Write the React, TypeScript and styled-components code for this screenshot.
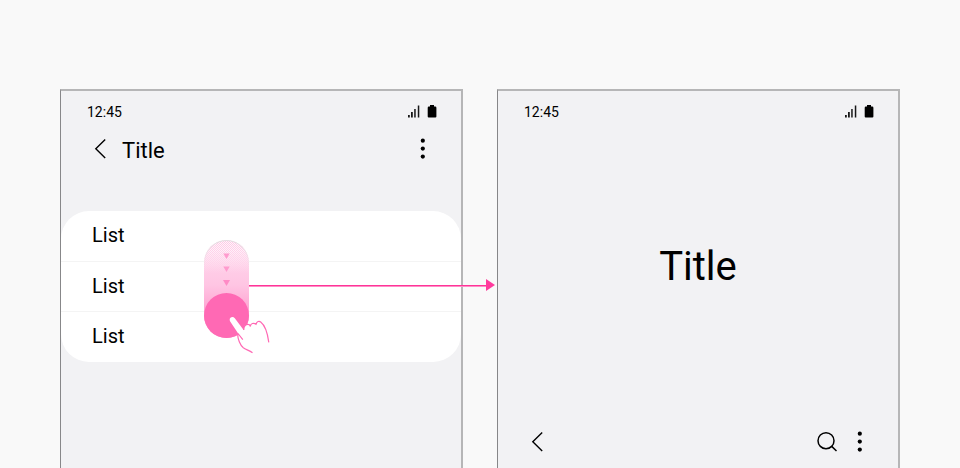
import React from "react";
import styled, { createGlobalStyle } from "styled-components";

const GlobalStyle = createGlobalStyle`
  *, *::before, *::after { box-sizing: border-box; }
  body {
    margin: 0;
    background: #f9f9f9;
    color: #000;
    font-family: Roboto, "Liberation Sans", sans-serif;
  }
`;

const Page = styled.main`
  display: grid;
  grid-template-columns: 1fr 1fr;
  gap: 34px;
  min-height: 100vh;
  padding: 89px 60px 0;
`;

const Phone = styled.section`
  display: flex;
  flex-direction: column;
  min-width: 0;
  background: #f2f2f4;
  border-style: solid;
  border-width: 2px 2px 0 1px;
  border-color: #b6b6b7 #b6b6b7 transparent #878789;
`;

const StatusBar = styled.div`
  display: flex;
  align-items: center;
  justify-content: space-between;
  height: 42px;
  padding: 0 24px 0 26px;
  font-size: 14px;
  line-height: 20px;
`;

const StatusIcons = styled.div`
  display: flex;
  gap: 7px;
  padding-bottom: 2px;
`;

const AppBar = styled.header`
  display: flex;
  align-items: center;
  height: 32px;
  padding: 0 26px 0 27px;
`;

const Toolbar = styled.footer`
  display: flex;
  align-items: center;
  height: 52px;
  padding: 0 26px 0 27px;
`;

const Spacer = styled.span`
  flex: 1;
`;

const IconButton = styled.button`
  display: flex;
  align-items: center;
  justify-content: center;
  width: 24px;
  height: 32px;
  padding: 0;
  border: 0;
  background: none;
  color: inherit;
  cursor: pointer;

  & + & { margin-left: 9px; }
`;

const BarTitle = styled.h1`
  margin: 0 0 0 10px;
  padding-top: 4px;
  font-size: 22px;
  line-height: 32px;
  font-weight: 400;
`;

const HeroTitle = styled.h1`
  flex: 1;
  display: flex;
  align-items: center;
  justify-content: center;
  margin: 0;
  padding-bottom: 16px;
  font-size: 40px;
  line-height: 48px;
  font-weight: 400;
`;

const ListArea = styled.div`
  position: relative;
  margin-top: 46px;
`;

const List = styled.ul`
  margin: 0;
  padding: 0;
  list-style: none;
  background: #fff;
  border-radius: 28px;
`;

const Row = styled.li`
  padding: 0 31px 2px;
  font-size: 20px;
  line-height: 48px;

  & + & {
    padding-bottom: 1px;
    border-top: 1px solid #f4f4f4;
  }
  &:last-child { padding-bottom: 2px; }
`;

const Gesture = styled.svg`
  position: absolute;
  top: 29px;
  left: 143px;
`;

const Connector = styled.div`
  position: absolute;
  top: 68px;
  left: 188px;
  right: -34px;
  display: flex;
  align-items: center;
  height: 12px;
  color: #ff3b9d;

  &::before {
    content: "";
    flex: 1;
    height: 2px;
    background: linear-gradient(#ff3498 50%, #ff8cc6 50%);
    transform: translateY(1px);
  }
`;

function Chevron() {
  return (
    <svg width="24" height="24" viewBox="0 0 24 24" fill="none" stroke="currentColor" strokeWidth="1.4" aria-hidden="true">
      <path d="M17.2 2.5 7.8 11.7l9.4 9.2" />
    </svg>
  );
}

function Dots() {
  return (
    <svg width="24" height="24" viewBox="0 0 24 24" fill="currentColor" aria-hidden="true">
      <circle cx="11.8" cy="3.7" r="2.1" />
      <circle cx="11.8" cy="11.6" r="2.1" />
      <circle cx="11.8" cy="19.6" r="2.1" />
    </svg>
  );
}

function SearchIcon() {
  return (
    <svg width="24" height="24" viewBox="0 0 24 24" fill="none" stroke="currentColor" strokeWidth="1.5" aria-hidden="true">
      <circle cx="11" cy="10.7" r="8" />
      <path d="m16.7 16.4 4.8 4.6" />
    </svg>
  );
}

function Status() {
  return (
    <StatusBar>
      <span>12:45</span>
      <StatusIcons>
        <svg width="13" height="13" viewBox="0 0 13 13" aria-label="Signal" role="img">
          <path d="M1 10h1.8v2.6H1zM4 7h1.8v5.6H4zM7.2 4h1.5v8.6H7.2zM10.8.5h1.5v12.1h-1.5z" fill="#181818" />
        </svg>
        <svg width="10" height="13" viewBox="0 0 10 13" aria-label="Battery" role="img">
          <path d="M3 0h4v1.5h1.2Q9.4 1.5 9.4 2.7v8.8q0 1-1 1H1.7q-1 0-1-1V2.7Q.7 1.5 1.9 1.5H3z" />
        </svg>
      </StatusIcons>
    </StatusBar>
  );
}

function SwipeDown() {
  return (
    <Gesture width="70" height="116" viewBox="0 0 70 116" aria-label="Swipe down" role="img">
      <defs>
        <linearGradient id="trail" x1="0" y1="0" x2="0" y2="1">
          <stop offset="0" stopColor="#fdfafc" />
          <stop offset=".12" stopColor="#fff0f8" />
          <stop offset=".34" stopColor="#ffcbe6" />
          <stop offset=".46" stopColor="#ffc5e3" />
          <stop offset=".7" stopColor="#ffa6d3" />
          <stop offset="1" stopColor="#ff8cc6" />
        </linearGradient>
        <pattern id="grain" width="2" height="2" patternUnits="userSpaceOnUse">
          <path d="M0 0h1v1H0zM1 1h1v1H1z" fill="#ffc2e2" />
        </pattern>
        <linearGradient id="fade" x1="0" y1="0" x2="0" y2="1">
          <stop offset="0" stopColor="#fff" />
          <stop offset="1" stopColor="#000" />
        </linearGradient>
        <linearGradient id="rim" x1="0" y1="0" x2="0" y2="1">
          <stop offset="0" stopColor="#e2dfe1" />
          <stop offset=".28" stopColor="#e2dfe1" stopOpacity="0" />
        </linearGradient>
        <mask id="upper">
          <rect width="45" height="34" fill="url(#fade)" />
        </mask>
      </defs>
      <rect width="45" height="98" rx="22.5" fill="url(#trail)" />
      <rect width="45" height="98" rx="22.5" fill="url(#grain)" mask="url(#upper)" />
      <rect x=".5" y=".5" width="44" height="97" rx="22" fill="none" stroke="url(#rim)" />
      <path d="M19.3 13.5h6.4L22.5 19zM19.3 26.5h6.4L22.5 32z" fill="#ff9bce" />
      <path d="M19 40h7l-3.5 6z" fill="#ff8bc6" />
      <circle cx="22.5" cy="75.5" r="22.5" fill="#ff69b4" />
      <path
        d="M38 99.2 26.2 81.4c-2-3.3 2.2-6 4.6-3.1l9.2 12.2v-2.8c.2-2.7 3-3.6 5.3-2.3l1.1 1.5c-.1-3 3.6-4.1 5.6-2.3 1-2.8 3-3.5 4.7-2.2 4.1 3.1 6.8 10.6 8.1 20.4L48.5 112c-3-1.7-6.6-2.3-9.2-4.2-3.2-2.5-5.6-8.8-5.7-14z"
        fill="#fff"
      />
      <path
        d="M33.6 93.8c.1 5.2 2.5 11.5 5.7 14 2.6 1.9 6.2 2.5 9.2 5M34 93.5l4.8 6.1M39.8 90v-1c0-4 3.2-5.4 5.6-4.2l1 1.7c-.1-3 3.6-4.1 5.6-2.3 1-2.8 3-3.5 4.7-2.2 4.1 3.1 6.8 10.6 8.1 20.4"
        fill="none"
        stroke="#ff69b4"
        strokeWidth="1.2"
      />
    </Gesture>
  );
}

export default function App() {
  return (
    <>
      <GlobalStyle />
      <Page>
        <Phone>
          <Status />
          <AppBar>
            <IconButton type="button" aria-label="Back"><Chevron /></IconButton>
            <BarTitle>Title</BarTitle>
            <Spacer />
            <IconButton type="button" aria-label="More options"><Dots /></IconButton>
          </AppBar>
          <ListArea>
            <List>
              <Row>List</Row>
              <Row>List</Row>
              <Row>List</Row>
            </List>
            <Connector>
              <svg width="9" height="12" viewBox="0 0 9 12" aria-hidden="true">
                <path d="M0 0v12l9-6z" fill="currentColor" />
              </svg>
            </Connector>
            <SwipeDown />
          </ListArea>
        </Phone>
        <Phone>
          <Status />
          <HeroTitle>Title</HeroTitle>
          <Toolbar>
            <IconButton type="button" aria-label="Back"><Chevron /></IconButton>
            <Spacer />
            <IconButton type="button" aria-label="Search"><SearchIcon /></IconButton>
            <IconButton type="button" aria-label="More options"><Dots /></IconButton>
          </Toolbar>
        </Phone>
      </Page>
    </>
  );
}
